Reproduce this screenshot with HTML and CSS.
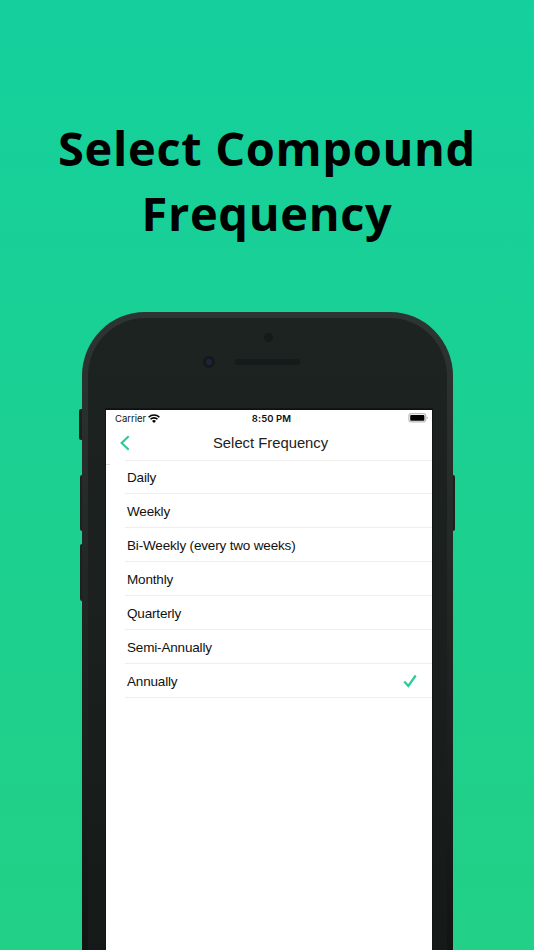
FILE: index.html
```html
<!DOCTYPE html>
<html lang="en">
  <head>
    <meta charset="UTF-8" />
    <meta name="viewport" content="width=device-width, initial-scale=1.0" />
    <title>Select Compound Frequency</title>
    <link rel="stylesheet" href="styles.css">
  </head>
  <body>
    <h1>Select Compound<br />Frequency</h1>

    <div class="phone">
      <!-- Side buttons -->
      <span class="button mute"></span>
      <span class="button volume-up"></span>
      <span class="button volume-down"></span>
      <span class="button power"></span>

      <div class="body">
        <div class="bezel">
          <span class="sensor"></span>
          <span class="camera"></span>
          <span class="speaker"></span>
        </div>

        <div class="screen">
          <div class="status-bar">
            <div class="carrier">
              <span>Carrier</span>
              <svg width="12" height="9" viewBox="0 0 12 9">
                <path d="M0.6 3.3a7.6 7.6 0 0 1 10.8 0M2.5 5.3a4.9 4.9 0 0 1 7 0" fill="none" stroke="#000" stroke-width="1.6" />
                <path d="M6 8.9 4 6.9a2.8 2.8 0 0 1 4 0z" />
              </svg>
            </div>
            <span class="time">8:50 PM</span>
            <div class="battery">
              <svg width="20" height="10" viewBox="0 0 20 10">
                <rect x="0.9" y="0.7" width="16.8" height="8.2" rx="2.3" fill="#fff" stroke="#bdbdbd" stroke-width="1.2" />
                <rect x="2.2" y="1.9" width="14.2" height="5.8" rx="1" />
                <path d="M18.7 3.6v2.6q1.1-.5 1.1-1.3t-1.1-1.3z" fill="#aaa" />
              </svg>
            </div>
          </div>

          <div class="nav-bar">
            <svg class="back" width="10" height="16" viewBox="0 0 10 16">
              <path d="M8.7 1.2 1.6 8l7.1 6.8" fill="none" stroke="#2bcb96" stroke-width="2.1" />
            </svg>
            <h2>Select Frequency</h2>
          </div>

          <ul class="frequency-list">
            <li>Daily</li>
            <li>Weekly</li>
            <li>Bi-Weekly (every two weeks)</li>
            <li>Monthly</li>
            <li>Quarterly</li>
            <li>Semi-Annually</li>
            <li>
              Annually
              <svg width="14" height="14" viewBox="0 0 14 14">
                <path d="M1.3 7.5 5.3 12 12.7 1.5" fill="none" stroke="#2bcb96" stroke-width="2.2" />
              </svg>
            </li>
          </ul>
        </div>
      </div>
    </div>
  </body>
</html>
```

FILE: styles.css
```css
* {
  box-sizing: border-box;
}

body {
  margin: 0;
  padding-top: 116px;
  height: 950px;
  display: flex;
  flex-direction: column;
  overflow: hidden;
  background: linear-gradient(#15d09d, #22d086);
  font-family: "Liberation Sans", Arial, sans-serif;
}

h1 {
  margin: 0;
  height: 196px;
  flex: none;
  font-family: "Open Sans", "Noto Sans", sans-serif;
  font-size: 47px;
  font-weight: bold;
  line-height: 64.6px;
  letter-spacing: 0.65px;
  text-align: center;
  color: #000;
}

.phone {
  position: relative;
  flex: 1;
  width: 371px;
  margin-left: 82px;
}

.body {
  position: relative;
  height: 100%;
  padding: 0 15px 0 18px;
  border: 6px solid transparent;
  border-bottom: 0;
  border-radius: 63px 63px 0 0 / 64px 64px 0 0;
  background:
    linear-gradient(#1d2321, #1b201e 50%, #151918) padding-box,
    linear-gradient(#2d3532, #272e2b 20%, #1d2220 60%, #111413) border-box;
}

.button {
  position: absolute;
  width: 6px;
  border-radius: 2px;
  background: #1c211f;
}

.mute {
  left: -3px;
  top: 97px;
  height: 31px;
}

.volume-up {
  left: -2px;
  top: 163px;
  height: 56px;
}

.volume-down {
  left: -2px;
  top: 232px;
  height: 57px;
}

.power {
  right: -2px;
  top: 163px;
  height: 56px;
}

.bezel {
  position: relative;
  height: 91px;
}

/* Front camera parts */
.sensor,
.camera,
.speaker {
  position: absolute;
  background: #151a1a;
}

.sensor {
  left: 157.5px;
  top: 15px;
  width: 9px;
  height: 9px;
  border-radius: 50%;
}

.camera {
  left: 96.5px;
  top: 38px;
  width: 12px;
  height: 12px;
  border: 3px solid #141919;
  border-radius: 50%;
  background: #1c2440;
}

.speaker {
  left: 129px;
  top: 41px;
  width: 65px;
  height: 6px;
  border-radius: 3px;
}

.screen {
  height: calc(100% - 91px);
  background: #fff;
  border-top: 1px solid #0d100f;
  box-shadow: 0 0 0 1px #111514;
}

.status-bar {
  height: 17px;
  padding: 0 4px 1px 9px;
  display: grid;
  grid-template-columns: 1fr auto 1fr;
  align-items: center;
  font-family: Inter, sans-serif;
  font-size: 9.5px;
  color: #111;
}

.carrier {
  display: flex;
  align-items: center;
  gap: 2px;
}

.time {
  font-weight: 600;
  letter-spacing: 0.1px;
}

.battery {
  display: flex;
  justify-content: flex-end;
}

.nav-bar {
  height: 33px;
  padding: 0 0 1px 13.5px;
  display: flex;
  align-items: center;
}

.nav-bar h2 {
  margin: 0 0 0 83.5px;
  font-size: 14.8px;
  font-weight: normal;
  color: #222;
}

.frequency-list {
  position: relative;
  margin: 0 0 0 18.5px;
  padding: 0;
  list-style: none;
  border-top: 1px solid #eee;
}

.frequency-list::before {
  content: "";
  position: absolute;
  left: -18.5px;
  top: 3px;
  width: 4px;
  height: 1px;
  background: #ddd;
}

.frequency-list li {
  height: 34px;
  padding: 1px 15px 0 2.5px;
  display: flex;
  align-items: center;
  justify-content: space-between;
  border-bottom: 1px solid #eee;
  font-size: 13.5px;
  letter-spacing: -0.17px;
  color: #111;
}

.frequency-list li:first-child {
  height: 33px;
}
```
